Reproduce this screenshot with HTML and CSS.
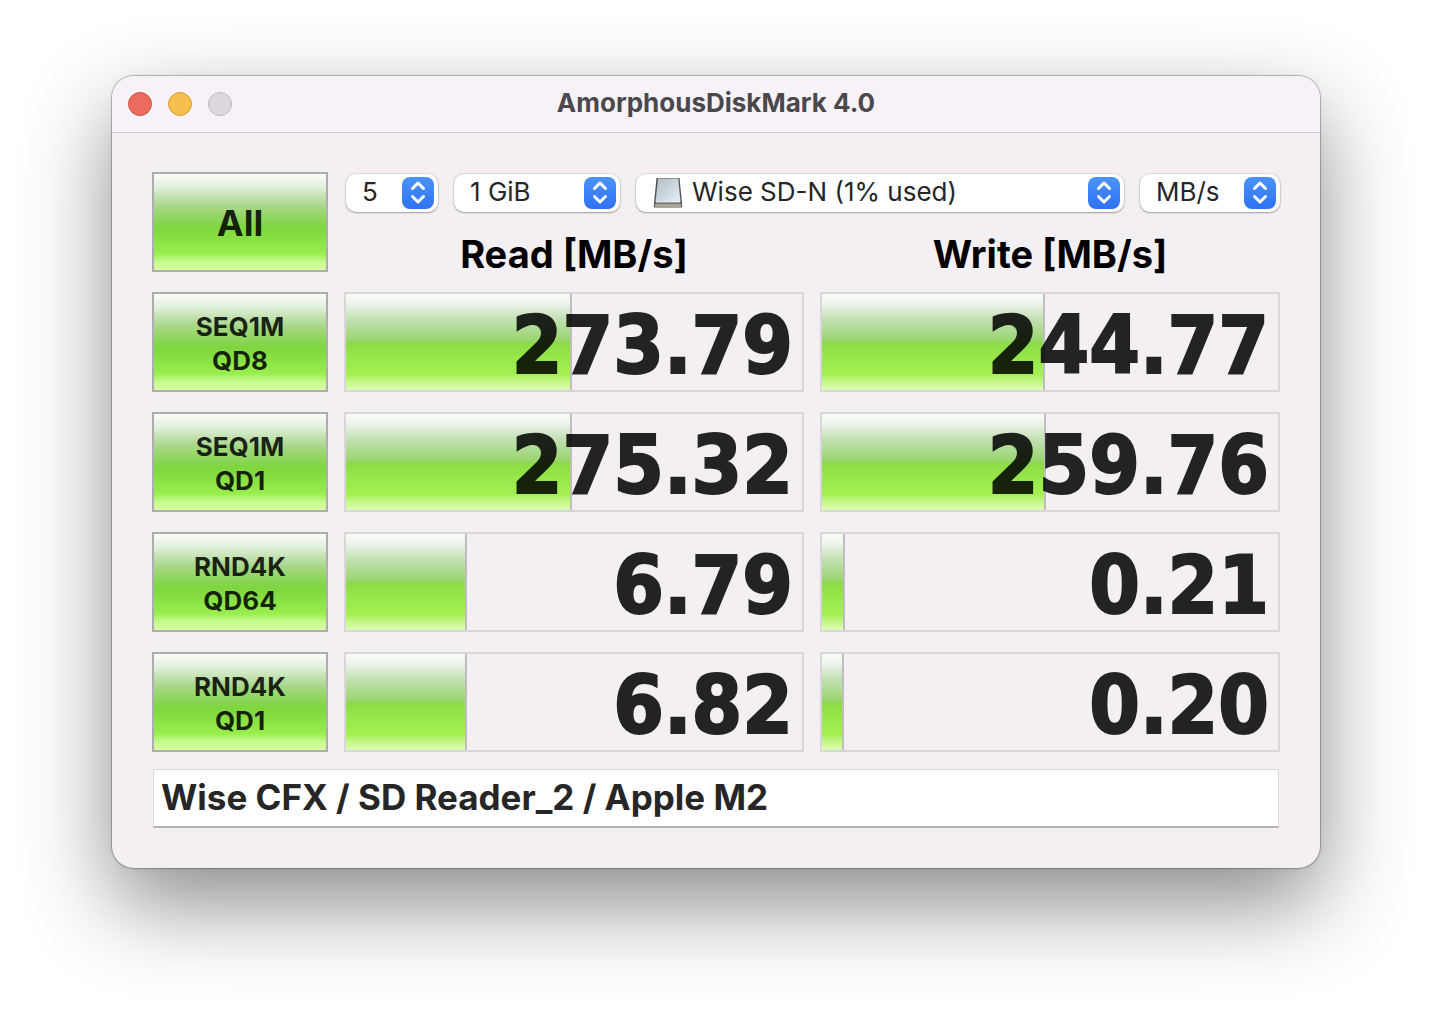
FILE: index.html
```html
<!DOCTYPE html>
<html lang="en">
<head>
<meta charset="utf-8">
<meta name="viewport" content="width=device-width, initial-scale=1">
<title>AmorphousDiskMark 4.0</title>
<link rel="stylesheet" href="styles.css">
</head>
<body>
<svg class="defs" aria-hidden="true">
  <symbol id="arrows" viewBox="0 0 32 32">
    <path d="M10.500 11.500 16 6l5.500 5.500M10.500 19.500 16 25l5.500-5.500" fill="none" stroke="#fff" stroke-width="3" stroke-linecap="round" stroke-linejoin="round"/>
  </symbol>
</svg>
<main class="window">
  <header class="titlebar">
    <div class="lights">
      <button class="light close" aria-label="Close"></button>
      <button class="light minimize" aria-label="Minimize"></button>
      <button class="light zoom" aria-label="Zoom" disabled></button>
    </div>
    <h1 class="title">AmorphousDiskMark 4.0</h1>
  </header>
  <div class="content">
    <div class="grid">
      <button class="run run-all">All</button>
      <div class="top">
        <div class="toolbar">
          <div class="popup">
            <select aria-label="Test count"><option>5</option></select>
            <svg class="arrows"><use href="#arrows"/></svg>
          </div>
          <div class="popup">
            <select aria-label="Test size"><option>1 GiB</option></select>
            <svg class="arrows"><use href="#arrows"/></svg>
          </div>
          <div class="popup drive">
            <select aria-label="Drive"><option>Wise SD-N (1% used)</option></select>
            <svg class="disk" viewBox="0 0 30 32" aria-hidden="true">
              <defs>
                <linearGradient id="face" x1="0" y1="0" x2="1" y2="1">
                  <stop offset="0" stop-color="#b4bdc4"/>
                  <stop offset="1" stop-color="#e2eef6"/>
                </linearGradient>
              </defs>
              <path d="M3.500 1h23L29 26v4.500H1V26z" fill="#55534f"/>
              <path d="M5 1.500h20.200L27.500 25h-25z" fill="url(#face)"/>
              <path d="M2 27h26v3H2z" fill="#aaa695"/>
              <path d="M2 26.500h26" stroke="#77746c" stroke-width="1"/>
              <path d="M3 25h24" stroke="#f4f8fa" stroke-width="1"/>
            </svg>
            <svg class="arrows"><use href="#arrows"/></svg>
          </div>
          <div class="popup">
            <select aria-label="Unit"><option>MB/s</option></select>
            <svg class="arrows"><use href="#arrows"/></svg>
          </div>
        </div>
        <div class="headings">
          <h2>Read [MB/s]</h2>
          <h2>Write [MB/s]</h2>
        </div>
      </div>

      <button class="run">SEQ1M<br>QD8</button>
      <div class="result"><div class="bar" style="width:49.600%"></div><output>273.79</output></div>
      <div class="result"><div class="bar" style="width:48.900%"></div><output>244.77</output></div>

      <button class="run">SEQ1M<br>QD1</button>
      <div class="result"><div class="bar" style="width:49.600%"></div><output>275.32</output></div>
      <div class="result"><div class="bar" style="width:49.200%"></div><output>259.76</output></div>

      <button class="run">RND4K<br>QD64</button>
      <div class="result"><div class="bar" style="width:26.600%"></div><output>6.79</output></div>
      <div class="result"><div class="bar" style="width:5.100%"></div><output>0.21</output></div>

      <button class="run">RND4K<br>QD1</button>
      <div class="result"><div class="bar" style="width:26.600%"></div><output>6.82</output></div>
      <div class="result"><div class="bar" style="width:4.900%"></div><output>0.20</output></div>
    </div>
    <input class="note" type="text" aria-label="Note" value="Wise CFX / SD Reader_2 / Apple M2">
  </div>
</main>
</body>
</html>
```
FILE: styles.css
```css
* { box-sizing: border-box; }

body {
  min-height: 100vh;
  margin: 0;
  padding: 76px 112px;
  background: #fff;
  font-family: Inter, "Liberation Sans", sans-serif;
  color: #262626;
}

.defs { position: absolute; width: 0; height: 0; }

button, select, input { font: inherit; color: inherit; margin: 0; }

.window {
  border-radius: 22px;
  background: #f3eff3;
  box-shadow:
    0 0 0 1px rgba(0, 0, 0, 0.22),
    0 0 4px rgba(0, 0, 0, 0.1),
    0 36px 88px rgba(0, 0, 0, 0.46);
}

.titlebar {
  display: grid;
  grid-template-columns: 1fr auto 1fr;
  align-items: center;
  height: 57px;
  padding: 0 16px;
  border-bottom: 1px solid #cfcad0;
  border-radius: 22px 22px 0 0;
  background: #f6f2f8;
}

.lights { display: flex; gap: 16px; }

.light {
  width: 24px;
  height: 24px;
  padding: 0;
  border: 1px solid;
  border-radius: 50%;
}

.close { background: #ec6a5e; border-color: #d05248; }
.minimize { background: #f4bf4f; border-color: #d8a03c; }
.zoom { background: #dcd8de; border-color: #bfbbc1; }

.title {
  margin: 0;
  padding-bottom: 2px;
  font-size: 26px;
  line-height: 32px;
  font-weight: 700;
  color: #4a484b;
}

.content { padding: 39px 40px 40px; }

.grid {
  display: grid;
  grid-template-columns: 176px 1fr 1fr;
  grid-auto-rows: 100px;
  gap: 20px 16px;
}

.run {
  padding: 4px 0 0;
  border: 2px solid #adadad;
  background: linear-gradient(#fafcf9 0%, #e6f1e2 12%, #a6d687 34%, #7ed63e 56%, #8ae244 70%, #98ef4e 83%, #c0f987 90%, #d8ffa8 100%);
  color: rgba(0, 0, 0, 0.85);
  font-size: 26px;
  line-height: 34px;
  font-weight: 700;
  text-align: center;
}

.run-all { padding-top: 2px; font-size: 36px; }

.top { grid-column: span 2; }

.toolbar {
  display: grid;
  grid-template-columns: 92px 166px 1fr 140px;
  gap: 16px;
  padding: 2px 0 0 2px;
}

.popup { position: relative; }

.popup select {
  display: block;
  width: 100%;
  height: 38px;
  padding: 0 40px 2px 16px;
  border: 0;
  border-radius: 10px;
  background: #fff;
  box-shadow: 0 0 1px 1px rgba(0, 0, 0, 0.08), 0 1px 2px rgba(0, 0, 0, 0.28);
  appearance: none;
  font-size: 26px;
  line-height: 32px;
}

.popup.drive select { padding-left: 56px; }

.arrows {
  position: absolute;
  top: 3px;
  right: 4px;
  width: 32px;
  height: 32px;
  border-radius: 8px;
  background: linear-gradient(#4b93f8, #2f72f6);
  pointer-events: none;
}

.disk {
  position: absolute;
  top: 3px;
  left: 17px;
  width: 30px;
  height: 32px;
  pointer-events: none;
}

.headings {
  display: grid;
  grid-template-columns: 1fr 1fr;
  gap: 16px;
  padding-top: 18px;
}

.headings h2 {
  margin: 0;
  font-size: 38px;
  line-height: 48px;
  font-weight: 700;
  text-align: center;
  color: #000;
}

.result {
  position: relative;
  border: 2px solid #d9d5d9;
}

.bar {
  height: 100%;
  border-right: 2px solid #c0bdc0;
  background: linear-gradient(#f9fbf8 0%, #eff5ed 9%, #c4e0b4 26%, #98d56c 49%, #8cda46 51%, #97e84a 66%, #a3ef50 83%, #c9f98f 93%, #ddffb4 100%);
}

.result output {
  position: absolute;
  inset: 0;
  padding-right: 9px;
  font-family: "DejaVu Sans Condensed", "DejaVu Sans", sans-serif;
  font-size: 81px;
  line-height: 102px;
  font-weight: 700;
  text-align: right;
  color: #000;
  -webkit-text-stroke: 2px #000;
  opacity: 0.85;
}

.note {
  display: block;
  width: calc(100% - 2px);
  height: 59px;
  margin: 17px 1px 0;
  padding: 0 7px 2px;
  border: 1px solid #dfdbdf;
  border-bottom: 2px solid #b5b2b5;
  background: #fff;
  font-size: 35px;
  line-height: 44px;
  font-weight: 700;
}
```
